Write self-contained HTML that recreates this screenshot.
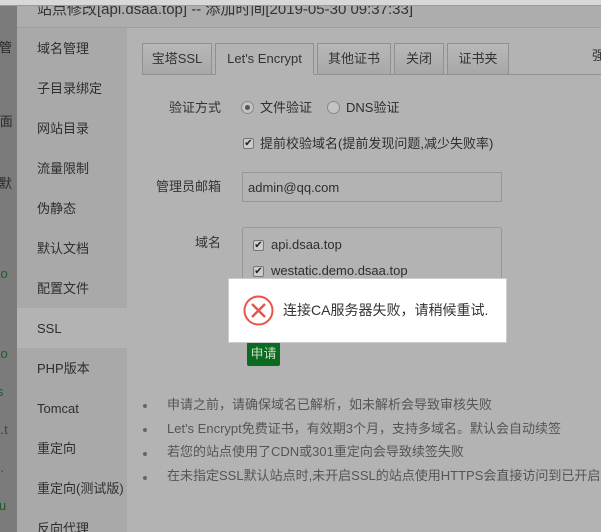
<!DOCTYPE html>
<html><head><meta charset="utf-8"><style>
*{margin:0;padding:0;box-sizing:border-box}
html,body{width:601px;height:532px;overflow:hidden}
body{background:#b3b3b3;font-family:"Liberation Sans","Noto Sans CJK SC",sans-serif;font-size:13px;line-height:16px;color:#2e2e2e;position:relative}
.a{position:absolute;white-space:nowrap}
#top{left:0;top:0;width:601px;height:6px;background:#d8d8d8;border-bottom:1px solid #9a9a9a}
#left{left:0;top:6px;width:17px;height:526px;background:#7b7b7b;overflow:hidden}
#left div{position:absolute;left:-14px;font-size:13px;color:#2a2a2a;white-space:nowrap}
#title{left:17px;top:6px;width:584px;height:22px;background:#adadad;border-bottom:1px solid #9e9e9e;font-size:15px;color:#333;padding-left:20px;line-height:8px;overflow:hidden}
#side{left:17px;top:28px;width:110px;height:504px;background:#a9a9a9}
.si{position:absolute;left:20px;font-size:13px;color:#2e2e2e;white-space:nowrap}
.tab{position:absolute;top:43px;height:32px;border:1px solid #909090;background:linear-gradient(#b8b8b8,#a8a8a8);line-height:30px;text-align:center;font-size:13px;color:#333}
.lbl{position:absolute;font-size:13px;color:#333;text-align:right;width:100px}
.cb{position:absolute;width:11px;height:11px;border:1px solid #777;background:#ccc;border-radius:2px;font-size:10px;line-height:9px;text-align:center;color:#222}
.bul{position:absolute;left:143px;width:4px;height:4px;border-radius:50%;background:#666}
.bt{position:absolute;left:167px;width:434px;overflow:hidden;font-size:13px;color:#555;white-space:nowrap}
</style></head><body>
<div class="a" id="top"></div>
<div class="a" id="left">
<div style="top:34px">站管</div><div style="top:108px">ux面</div><div style="top:170px">改默</div>
<div style="top:260px;color:#1e5a2a">a.to</div><div style="top:300px;color:#1e5a2a">op</div><div style="top:340px;color:#1e5a2a">a.to</div><div style="top:378px;color:#1e5a2a">.ds</div><div style="top:416px;color:#1e5a2a">aa.t</div><div style="top:454px;color:#1e5a2a">ou.</div><div style="top:492px;color:#1e5a2a">.clu</div>
</div>
<div class="a" id="title">站点修改[api.dsaa.top] -- 添加时间[2019-05-30 09:37:33]</div>
<div class="a" id="side">
<div style="position:absolute;left:0;top:280px;width:110px;height:40px;background:#b3b3b3"></div>
<div class="si" style="top:13px">域名管理</div>
<div class="si" style="top:53px">子目录绑定</div>
<div class="si" style="top:93px">网站目录</div>
<div class="si" style="top:133px">流量限制</div>
<div class="si" style="top:173px">伪静态</div>
<div class="si" style="top:213px">默认文档</div>
<div class="si" style="top:253px">配置文件</div>
<div class="si" style="top:293px">SSL</div>
<div class="si" style="top:333px">PHP版本</div>
<div class="si" style="top:373px">Tomcat</div>
<div class="si" style="top:413px">重定向</div>
<div class="si" style="top:453px">重定向(测试版)</div>
<div class="si" style="top:493px">反向代理</div>
</div>
<div class="a" style="left:142px;top:74px;width:459px;height:1px;background:#909090"></div>
<div class="tab" style="left:142px;width:70px">宝塔SSL</div>
<div class="tab" style="left:215px;width:99px;background:#b3b3b3;border-bottom-color:#b3b3b3">Let's Encrypt</div>
<div class="tab" style="left:317px;width:74px">其他证书</div>
<div class="tab" style="left:394px;width:50px">关闭</div>
<div class="tab" style="left:447px;width:62px">证书夹</div>
<div class="a" style="left:592px;top:48px;width:9px;overflow:hidden">强</div>
<div class="lbl" style="left:121px;top:100px">验证方式</div>
<div class="a" style="left:241px;top:101px;width:13px;height:13px;border-radius:50%;border:1px solid #888;background:#c4c4c4"><div style="margin:3px;width:5px;height:5px;border-radius:50%;background:#555"></div></div>
<div class="a" style="left:260px;top:100px">文件验证</div>
<div class="a" style="left:327px;top:101px;width:13px;height:13px;border-radius:50%;border:1px solid #888;background:#c4c4c4"></div>
<div class="a" style="left:346px;top:100px">DNS验证</div>
<div class="cb" style="left:243px;top:138px">✔</div>
<div class="a" style="left:260px;top:136px">提前校验域名(提前发现问题,减少失败率)</div>
<div class="lbl" style="left:121px;top:179px">管理员邮箱</div>
<div class="a" style="left:242px;top:172px;width:260px;height:30px;border:1px solid #979797;padding:7px 5px">admin@qq.com</div>
<div class="lbl" style="left:121px;top:235px">域名</div>
<div class="a" style="left:242px;top:227px;width:260px;height:64px;border:1px solid #979797;border-radius:3px"></div>
<div class="cb" style="left:253px;top:240px">✔</div>
<div class="a" style="left:271px;top:237px">api.dsaa.top</div>
<div class="cb" style="left:253px;top:266px">✔</div>
<div class="a" style="left:271px;top:263px">westatic.demo.dsaa.top</div>
<div class="a" style="left:247px;top:342px;width:33px;height:24px;background:#0c6b21;border-radius:2px;color:#c8dcc8;font-size:13px;line-height:23px;text-align:center">申请</div>
<div class="a" style="left:228px;top:278px;width:279px;height:65px;background:#fff;border:1px solid #ccc"></div>
<svg class="a" style="left:243px;top:295px" width="31" height="31" viewBox="0 0 31 31"><circle cx="15.5" cy="15.5" r="14" fill="none" stroke="#e8534a" stroke-width="2"/><path d="M9 9L22 22M22 9L9 22" stroke="#e8534a" stroke-width="2.4"/></svg>
<div class="a" style="left:283px;top:302px;font-size:14px;color:#333">连接CA服务器失败，请稍候重试.</div>
<div class="bul" style="left:143px;top:404px"></div><div class="bt" style="top:397px">申请之前，请确保域名已解析，如未解析会导致审核失败</div>
<div class="bul" style="left:143px;top:428px"></div><div class="bt" style="top:421px">Let's Encrypt免费证书，有效期3个月，支持多域名。默认会自动续签</div>
<div class="bul" style="left:143px;top:452px"></div><div class="bt" style="top:444px">若您的站点使用了CDN或301重定向会导致续签失败</div>
<div class="bul" style="left:143px;top:476px"></div><div class="bt" style="top:468px">在未指定SSL默认站点时,未开启SSL的站点使用HTTPS会直接访问到已开启SSL的站点</div>
</body></html>
